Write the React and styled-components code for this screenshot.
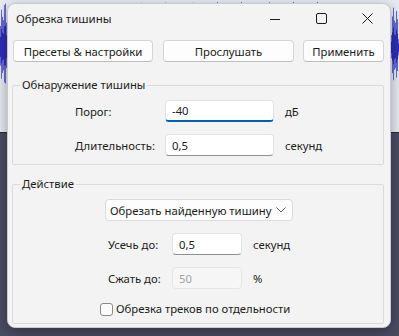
import styled, { createGlobalStyle } from "styled-components";

const GlobalStyle = createGlobalStyle`
  body {
    margin: 0;
    font-family: "Segoe UI", "Noto Sans", sans-serif;
    font-size: 11.3px;
    color: #1b1b1b;
  }
`;

const Desktop = styled.div`
  position: relative;
  width: 399px;
  height: 336px;
  overflow: hidden;
  padding: 3px 8px 0 7px;
  box-sizing: border-box;
  background: linear-gradient(
    to bottom,
    #e8ebf2 0,
    #e8ebf2 132px,
    #2a2a35 132px,
    #2a2a35 133px,
    #4b4c63 133px
  );
`;

const Track = styled.svg`
  position: absolute;
  left: 0;
  top: 0;
`;

const Window = styled.div`
  position: relative;
  display: flex;
  flex-direction: column;
  height: 325px;
  box-sizing: border-box;
  background: #f3f3f3;
  border: 1px solid #c9c9cc;
  border-radius: 8px;
  box-shadow: 0 4px 14px rgba(0, 0, 0, 0.35);
  padding-bottom: 9px;
  white-space: nowrap;
`;

const TitleBar = styled.div`
  display: flex;
  align-items: center;
  height: 29px;
  padding-left: 8px;
`;

const Title = styled.div`
  flex: 1;
  font-size: 11.5px;
`;

const Control = styled.div`
  width: 46px;
  height: 29px;
  display: flex;
  align-items: center;
  justify-content: center;
`;

const ButtonRow = styled.div`
  display: flex;
  margin-top: 7px;
  padding: 0 6px 0 5px;
  gap: 10px;
`;

const Button = styled.button`
  width: ${(p) => p.$w}px;
  height: 22px;
  margin-left: ${(p) => p.$ml || 0}px;
  padding: 0;
  font: inherit;
  color: #1b1b1b;
  background: #fdfdfd;
  border: 1px solid #d6d6d6;
  border-bottom-color: #bdbdbd;
  border-radius: 4px;
`;

const Group = styled.fieldset`
  margin: ${(p) => p.$mt}px 6px 0 4px;
  padding: 7px 0 ${(p) => p.$pb}px 0;
  border: 1px solid #dadada;
  border-radius: 2px;
  min-width: 0;
`;

const Legend = styled.legend`
  margin-left: 7px;
  padding: 0 2px;
  line-height: 16px;
`;

const FieldGrid = styled.div`
  display: grid;
  grid-template-columns: ${(p) => p.$label}px ${(p) => p.$input}px auto;
  column-gap: 11px;
  row-gap: 12px;
  align-items: center;
  margin-left: ${(p) => p.$indent}px;
`;

const Label = styled.div`
  margin-right: -11px;
`;

const Input = styled.div`
  height: 22px;
  box-sizing: border-box;
  display: flex;
  align-items: center;
  padding: 0 6px;
  background: ${(p) => (p.$disabled ? "#f6f6f6" : "#ffffff")};
  color: ${(p) => (p.$disabled ? "#a3a3a3" : "#1b1b1b")};
  border: 1px solid ${(p) => (p.$disabled ? "#e6e6e6" : "#e3e3e3")};
  border-bottom: ${(p) =>
    p.$focused
      ? "2px solid #005fb8"
      : p.$disabled
      ? "1px solid #e6e6e6"
      : "1px solid #8f8f8f"};
  border-radius: 4px;
`;

const ActionBody = styled.div`
  display: flex;
  flex-direction: column;
  gap: 12px;
`;

const Select = styled.div`
  width: 188px;
  height: 22px;
  box-sizing: border-box;
  margin-left: 92px;
  display: flex;
  align-items: center;
  justify-content: space-between;
  padding: 0 6px 0 4px;
  background: #fdfdfd;
  border: 1px solid #dcdcdc;
  border-radius: 4px;
`;

const CheckRow = styled.label`
  display: flex;
  align-items: center;
  gap: 3px;
  margin-left: 87px;
  line-height: 16px;
`;

const Box = styled.span`
  width: 13px;
  height: 13px;
  box-sizing: border-box;
  border: 1px solid #8a8a8a;
  border-radius: 3px;
  background: #fbfbfb;
`;

const bars = Array.from({ length: 399 }, (_, i) => {
  const a =
    Math.abs(Math.sin(i * 0.37) * 18 + Math.cos(i * 0.13) * 14 + Math.sin(i * 1.7) * 10) + 8;
  return Math.min(a, 46);
});

const Waveform = () => (
  <Track width="399" height="132" viewBox="0 0 399 132">
    {bars.map((a, i) => (
      <line key={i} x1={i + 0.5} x2={i + 0.5} y1={48 - a} y2={48 + a * 0.8} stroke="#6a6ad6" strokeWidth="1" />
    ))}
    {bars.map((a, i) => (
      <line key={"c" + i} x1={i + 0.5} x2={i + 0.5} y1={48 - a * 0.5} y2={48 + a * 0.4} stroke="#2e2eb8" strokeWidth="1" />
    ))}
  </Track>
);

const App = () => (
  <Desktop>
    <GlobalStyle />
    <Waveform />
    <Window>
      <TitleBar>
        <Title>Обрезка тишины</Title>
        <Control>
          <svg width="10" height="10" viewBox="0 0 10 10">
            <line x1="0" y1="5.5" x2="10" y2="5.5" stroke="#1b1b1b" strokeWidth="1" />
          </svg>
        </Control>
        <Control>
          <svg width="11" height="11" viewBox="0 0 11 11">
            <rect x="0.5" y="0.5" width="10" height="10" rx="1.5" fill="none" stroke="#1b1b1b" strokeWidth="1" />
          </svg>
        </Control>
        <Control>
          <svg width="11" height="11" viewBox="0 0 11 11">
            <path d="M0.5 0.5 L10.5 10.5 M10.5 0.5 L0.5 10.5" stroke="#1b1b1b" strokeWidth="1" />
          </svg>
        </Control>
      </TitleBar>

      <ButtonRow>
        <Button $w={140}>Пресеты &amp; настройки</Button>
        <Button $w={131}>Прослушать</Button>
        <Button $w={81} $ml={-1}>Применить</Button>
      </ButtonRow>

      <Group $mt={15} $pb={8}>
        <Legend>Обнаружение тишины</Legend>
        <FieldGrid $label={79} $input={109} $indent={62}>
          <Label>Порог:</Label>
          <Input $focused>-40</Input>
          <div>дБ</div>
          <Label>Длительность:</Label>
          <Input>0,5</Input>
          <div>секунд</div>
        </FieldGrid>
      </Group>

      <Group $mt={11} $pb={6}>
        <Legend>Действие</Legend>
        <ActionBody>
          <Select>
            <span>Обрезать найденную тишину</span>
            <svg width="10" height="6" viewBox="0 0 10 6">
              <path d="M0.5 0.5 L5 5 L9.5 0.5" fill="none" stroke="#5c5c5c" strokeWidth="1" />
            </svg>
          </Select>
          <FieldGrid $label={53} $input={70} $indent={95}>
            <Label>Усечь до:</Label>
            <Input>0,5</Input>
            <div>секунд</div>
            <Label>Сжать до:</Label>
            <Input $disabled>50</Input>
            <div>%</div>
          </FieldGrid>
          <CheckRow>
            <Box />
            Обрезка треков по отдельности
          </CheckRow>
        </ActionBody>
      </Group>
    </Window>
  </Desktop>
);

export default App;
